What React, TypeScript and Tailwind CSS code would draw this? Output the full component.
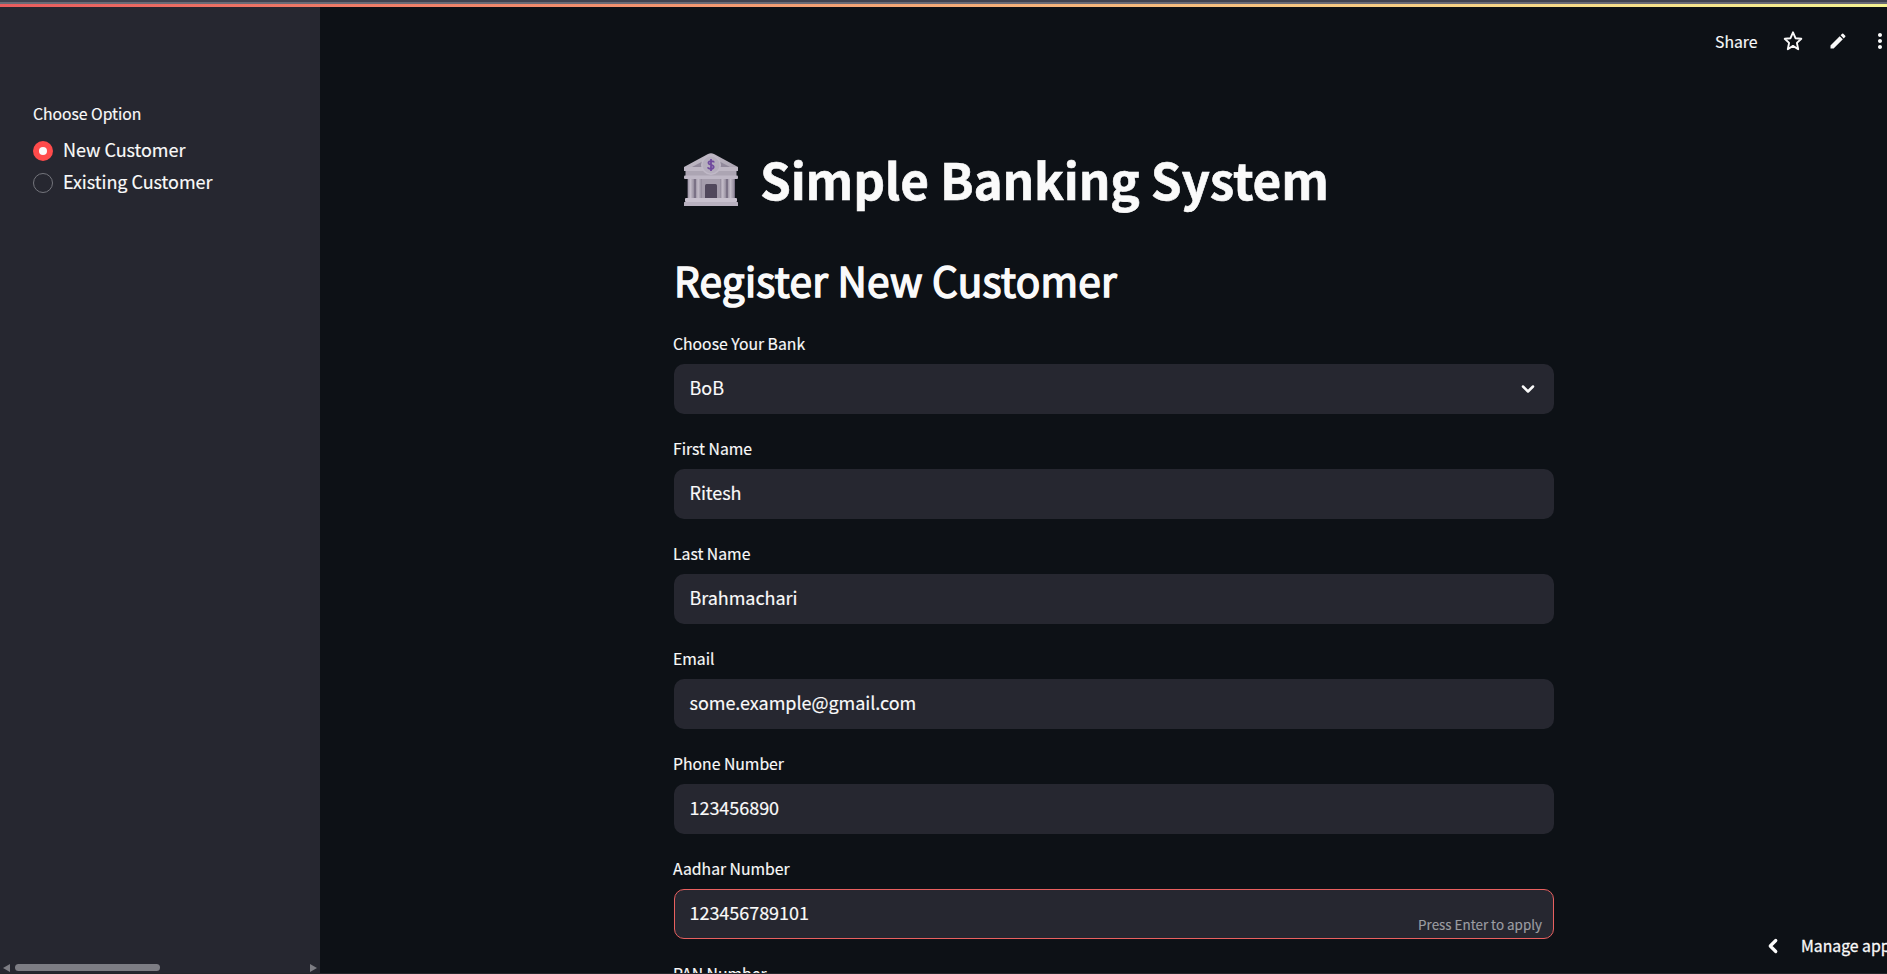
import { FiChevronDown, FiChevronLeft } from "react-icons/fi";
import { MdEdit, MdMoreVert } from "react-icons/md";

function BankIcon() {
  return (
    <svg viewBox="0 0 54 53" className="mt-[2px] ml-[10px] h-[53px] w-[54px] shrink-0">
      <defs>
        <linearGradient id="stone" x1="0" x2="1" y1="0" y2="1">
          <stop offset="0" stopColor="#c5bfca" />
          <stop offset="1" stopColor="#a9a2b0" />
        </linearGradient>
        <linearGradient id="column" x1="0" x2="1" y1="0" y2="0">
          <stop offset="0" stopColor="#a199a9" />
          <stop offset="0.4" stopColor="#c4bdc9" />
          <stop offset="1" stopColor="#958d9e" />
        </linearGradient>
      </defs>
      <path d="M0 14 L24 1 Q27 -0.6 30 1 L54 14 V18 H0Z" fill="url(#stone)" />
      <path d="M8 14 L27 4 L46 14Z" fill="#91899b" />
      <rect y="14" width="54" height="4" rx="1" fill="#beb7c4" />
      <rect x="1.500" y="18" width="51" height="5" fill="#aca5b3" />
      <rect y="22.500" width="54" height="3.500" rx="1" fill="#beb7c5" />
      <rect x="3.500" y="26" width="47.500" height="19" fill="#7b7286" />
      <rect x="4" y="26" width="6" height="19" fill="url(#column)" />
      <rect x="12" y="26" width="5.500" height="19" fill="url(#column)" />
      <rect x="17.500" y="26" width="19" height="19" fill="#a59dac" />
      <rect x="36.500" y="26" width="5.500" height="19" fill="url(#column)" />
      <rect x="44" y="26" width="6" height="19" fill="url(#column)" />
      <path d="M21 45V32.500Q21 31 22.500 31H31.500Q33 31 33 32.500V45Z" fill="#51485c" />
      <rect x="1" y="45" width="52" height="4" rx="1" fill="#c8c1ce" />
      <rect y="49" width="54" height="4" rx="0.500" fill="#b8b1bf" />
      <circle cx="27" cy="12" r="10" fill="#c0b9c7" />
      <circle cx="27" cy="12" r="8.500" fill="#b5aebd" />
      <path
        d="M29.800 9.500C29.800 7.800 24.400 7.300 24.400 10C24.400 12.400 29.700 11.400 29.700 14C29.700 16.600 24 16.200 24 14.200M27 6V18"
        fill="none"
        stroke="#704a9e"
        strokeWidth="1.800"
      />
    </svg>
  );
}

function StarIcon() {
  return (
    <svg viewBox="0 0 22 22" className="mb-px size-[22px]" fill="none" stroke="currentColor" strokeWidth="1.900" strokeLinejoin="round">
      <path d="M11 2.300L13.500 8.200L19.300 8.800L14.900 12.900L16.200 19.200L11 15.900L5.800 19.200L7.100 12.900L2.700 8.800L8.500 8.200Z" />
    </svg>
  );
}

type FieldProps = { label: string; value: string; select?: boolean; active?: boolean };

function Field({ label, value, select, active }: FieldProps) {
  return (
    <div className="mb-5 shrink-0">
      <div className="-ml-px mb-[5px] flex h-[30px] items-center text-[15.750px] tracking-[-0.01px]">{label}</div>
      <div
        className={
          active
            ? "relative flex h-[50px] items-center rounded-[10px] border border-[#e8605f] bg-[#262730] px-[14.500px] text-[18px]"
            : "relative flex h-[50px] items-center rounded-[10px] bg-[#262730] px-[15.500px] text-[18px]"
        }
      >
        <span className="mb-[3px] tracking-[-0.04px]">{value}</span>
        {select && <FiChevronDown className="mr-[0.500px] ml-auto size-[20px]" strokeWidth={3} />}
        {active && (
          <span className="absolute right-[11px] bottom-[4px] text-[13.400px] leading-[20px] text-[#9c9da2]">
            Press Enter to apply
          </span>
        )}
      </div>
    </div>
  );
}

function Radio({ label, checked }: { label: string; checked?: boolean }) {
  return (
    <div className="flex h-8 items-center gap-[10px] text-[18px]">
      {checked ? (
        <span className="mt-px flex size-5 items-center justify-center rounded-full bg-[#ff4b4b]">
          <span className="size-2 rounded-full bg-[#fafafa]" />
        </span>
      ) : (
        <span className="mt-px size-5 rounded-full border border-[#74757c]" />
      )}
      <span className="mb-[1px] tracking-[-0.04px]">{label}</span>
    </div>
  );
}

export default function App() {
  return (
    <div className="relative flex h-[974px] w-[1887px] flex-col overflow-hidden bg-[#0d1116] font-['Noto_Sans_CJK_SC','Noto_Sans',sans-serif] text-[#fafafa] [-webkit-text-stroke-width:0.150px]">
      <div className="h-[2px] shrink-0 bg-[#40424f]" />
      <div className="h-[2px] shrink-0 bg-[#696a76]" />
      <div className="h-[3px] shrink-0 bg-linear-to-r from-[#e95c5e] to-[#f5f392]" />
      <div className="flex min-h-0 flex-1">
        <aside className="flex w-80 shrink-0 flex-col bg-[#262730]">
          <div className="px-[33px] pt-[92px]">
            <div className="mb-[5px] flex h-[30px] items-center text-[15.750px] tracking-[-0.04px]">Choose Option</div>
            <Radio label="New Customer" checked />
            <Radio label="Existing Customer" />
          </div>
          <div className="mt-auto mb-[2px] flex h-[9px] items-center px-[3px]">
            <svg viewBox="0 0 7 8" className="h-2 w-[7px]" fill="#7d7d84"><path d="M7 0V8L0 4Z" /></svg>
            <div className="ml-[5px] h-[7px] w-[145px] rounded-full bg-[#7d7d84]" />
            <svg viewBox="0 0 7 8" className="ml-auto h-2 w-[7px]" fill="#7d7d84"><path d="M0 0V8L7 4Z" /></svg>
          </div>
        </aside>
        <main className="flex min-w-0 flex-1 flex-col overflow-hidden">
          <header className="flex h-[70px] shrink-0 items-center pl-[1395px] whitespace-nowrap">
            <span className="text-[15.750px]">Share</span>
          </header>
          <div className="ml-[354px] flex w-[880px] flex-col">
            <h1 className="mt-[68px] flex h-[66px] items-center text-[49.500px] font-bold whitespace-nowrap [-webkit-text-stroke-width:0.600px]">
              <BankIcon />
              <span className="mt-[2px] ml-[22px] tracking-[-0.17px]">Simple Banking System</span>
            </h1>
            <h2 className="mt-[41px] mb-[20px] flex h-[57px] items-center text-[40.500px] font-normal tracking-[0.260px] [-webkit-text-stroke-width:1.500px]">
              Register New Customer
            </h2>
            <Field label="Choose Your Bank" value="BoB" select />
            <Field label="First Name" value="Ritesh" />
            <Field label="Last Name" value="Brahmachari" />
            <Field label="Email" value="some.example@gmail.com" />
            <Field label="Phone Number" value="123456890" />
            <Field label="Aadhar Number" value="123456789101" active />
            <Field label="PAN Number" value="" />
          </div>
        </main>
      </div>
      <div className="absolute top-[29px] left-[1782px] flex items-center">
        <StarIcon />
        <MdEdit className="mb-px ml-[24px] size-[20px]" />
        <MdMoreVert className="ml-[20px] size-[24px]" />
      </div>
      <div className="absolute top-[931px] left-[1762px] flex h-[30px] items-center whitespace-nowrap">
        <FiChevronLeft className="size-[22px]" strokeWidth={3.500} />
        <span className="ml-[17px] text-[15.750px] [-webkit-text-stroke-width:0.300px]">Manage app</span>
      </div>
      <div className="absolute bottom-0 h-px w-full bg-[#24262b]" />
    </div>
  );
}
